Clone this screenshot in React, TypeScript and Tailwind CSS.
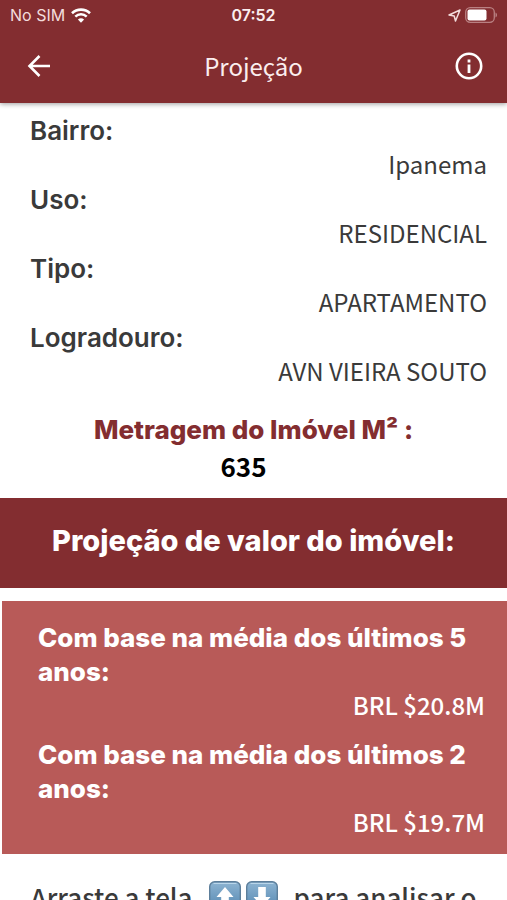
import { ReactNode } from "react";

const DETAILS = [
  { label: "Bairro:", value: "Ipanema" },
  { label: "Uso:", value: "RESIDENCIAL" },
  { label: "Tipo:", value: "APARTAMENTO" },
  { label: "Logradouro:", value: "AVN VIEIRA SOUTO" },
];

const PROJECTIONS = [
  { label: "Com base na média dos últimos 5 anos:", value: "BRL $20.8M" },
  { label: "Com base na média dos últimos 2 anos:", value: "BRL $19.7M" },
];

function StatusBar() {
  return (
    <div className="grid grid-cols-3 items-center h-[30px] px-[10px] font-['Inter',sans-serif] text-base">
      <div className="flex items-center gap-[6px] text-[#f3dcdc]">
        <span>No SIM</span>
        <svg className="w-5 h-[15px]" viewBox="0 0 20 15" fill="none" aria-hidden="true">
          <path d="M1 5.2a13 13 0 0 1 18 0" stroke="white" strokeWidth="2.6" />
          <path d="M4.3 8.6a8.3 8.3 0 0 1 11.4 0" stroke="white" strokeWidth="2.5" />
          <path d="M10 14.8 6.9 11.6a4.5 4.5 0 0 1 6.2 0z" fill="white" />
        </svg>
      </div>
      <span className="text-center font-semibold text-[#fbeeee]">07:52</span>
      <div className="flex items-center justify-end gap-1">
        <svg className="w-[13px] h-[13px]" viewBox="0 0 13 13" fill="none" aria-hidden="true">
          <path
            d="M12 1 1 6l5.2 1L7.5 12z"
            stroke="#f3dcdc"
            strokeWidth="1.5"
            strokeLinejoin="round"
          />
        </svg>
        <svg className="w-8 h-4" viewBox="0 0 32 16" fill="none" aria-hidden="true">
          <rect x=".7" y=".7" width="28.6" height="14.6" rx="4.5" stroke="#b98082" strokeWidth="1.3" />
          <rect x="2.5" y="2.5" width="19" height="11" rx="2" fill="white" />
          <path d="M30.5 5.5v5c1-.4 1.5-1.3 1.5-2.5s-.5-2.1-1.5-2.5z" fill="#b98082" />
        </svg>
      </div>
    </div>
  );
}

function Header() {
  return (
    <header className="relative z-10 shrink-0 bg-[#832d30] text-white shadow-[0_1px_5px_rgba(0,0,0,0.4)]">
      <StatusBar />
      <div className="flex items-center justify-between h-[73px] px-6 pb-[2px]">
        <button type="button" aria-label="Voltar">
          <svg className="w-7 h-7" viewBox="0 0 28 28" fill="none" aria-hidden="true">
            <path d="M26 14H6M15.5 4 5.5 14l10 10" stroke="white" strokeWidth="2.6" />
          </svg>
        </button>
        <h1 className="font-['Noto_Sans_CJK_JP',sans-serif] text-2xl text-[#fbeeee]">Projeção</h1>
        <button type="button" aria-label="Informações">
          <svg className="w-7 h-7" viewBox="0 0 28 28" fill="none" aria-hidden="true">
            <circle cx="14" cy="14" r="12.2" stroke="white" strokeWidth="2.6" />
            <path d="M14 12.5V21M14 7.5v3" stroke="white" strokeWidth="2.8" />
          </svg>
        </button>
      </div>
    </header>
  );
}

function ArrowKey({ children }: { children: ReactNode }) {
  return (
    <svg className="w-8 h-8 shrink-0" viewBox="0 0 32 32" aria-hidden="true">
      <defs>
        <linearGradient id="key" x1="0" y1="0" x2="0" y2="1">
          <stop offset="0" stopColor="#8db4d2" />
          <stop offset="1" stopColor="#4f83ae" />
        </linearGradient>
      </defs>
      <rect x=".7" y=".7" width="30.6" height="30.6" rx="5" fill="url(#key)" stroke="#5d7f9b" strokeWidth="1.4" />
      <path d="M5 2.5h22" stroke="#b9d6ea" strokeWidth="1.2" strokeLinecap="round" />
      {children}
    </svg>
  );
}

export default function App() {
  return (
    <div className="flex flex-col h-screen bg-white text-[#3a3a3a]">
      <Header />
      <main className="flex-1 overflow-y-auto [scrollbar-width:none]">
        <dl className="flex flex-col gap-[3px] pt-[11px] pl-[30px] pr-5">
          {DETAILS.map(({ label, value }) => (
            <div key={label}>
              <dt className="font-['Inter',sans-serif] font-semibold text-[26px] leading-[33px]">
                {label}
              </dt>
              <dd className="font-['Noto_Sans_CJK_JP',sans-serif] text-2xl leading-[33px] text-right">
                {value}
              </dd>
            </div>
          ))}
        </dl>

        <section className="pt-[25px] pb-[14px] text-center">
          <h2 className="font-['Inter',sans-serif] font-extrabold text-[26px] leading-9 text-[#832d30]">
            Metragem do Imóvel M² :
          </h2>
          <p className="pr-5 font-['Noto_Sans_CJK_JP',sans-serif] font-bold text-[26px] leading-9 text-black">
            635
          </p>
        </section>

        <h2 className="pt-[22px] pb-[26px] bg-[#832d30] text-center font-['Inter',sans-serif] font-extrabold text-[29px] leading-[42px] text-white">
          Projeção de valor do imóvel:
        </h2>

        <dl className="flex flex-col gap-[17px] mt-[13px] ml-[2px] pt-5 pb-4 pl-9 pr-[22px] bg-[#b85a58] text-white">
          {PROJECTIONS.map(({ label, value }) => (
            <div key={label}>
              <dt className="font-['Inter',sans-serif] font-extrabold text-[26px] leading-[34px]">
                {label}
              </dt>
              <dd className="font-['Noto_Sans_CJK_JP',sans-serif] font-medium text-2xl leading-8 text-right">
                {value}
              </dd>
            </div>
          ))}
        </dl>

        <p className="flex justify-center mt-[27px] px-6 font-['Noto_Sans_CJK_JP',sans-serif] font-medium text-[26px] leading-8 whitespace-nowrap">
          Arraste a tela
          <span className="flex gap-[5px] mx-4">
            <ArrowKey>
              <path d="M16 6 7.5 16h4.700v10h7.600V16h4.700z" fill="white" />
            </ArrowKey>
            <ArrowKey>
              <path d="M16 26 7.5 16h4.700V6h7.600v10h4.700z" fill="white" />
            </ArrowKey>
          </span>
          para analisar o
        </p>
      </main>
    </div>
  );
}
